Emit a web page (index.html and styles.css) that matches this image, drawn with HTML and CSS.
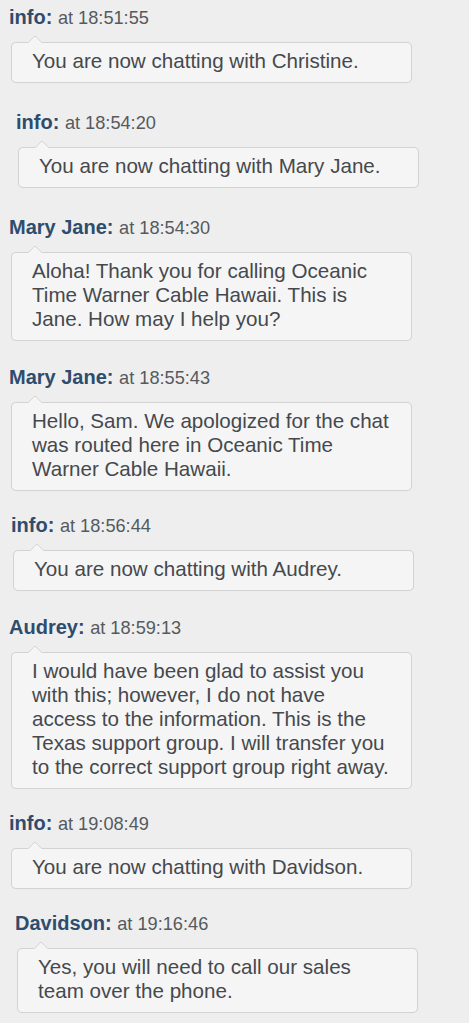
FILE: index.html
```html
<!DOCTYPE html>
<html lang="en">
<head>
<meta charset="utf-8">
<title>Chat transcript</title>
<link rel="stylesheet" href="styles.css">
</head>
<body>
<div class="log">
  <div class="entry gap-lg">
    <div class="meta"><span class="who">info:</span> <span class="when">at 18:51:55</span></div>
    <div class="bubble">You are now chatting with Christine.</div>
  </div>
  <div class="entry gap-lg indent-lg">
    <div class="meta"><span class="who">info:</span> <span class="when">at 18:54:20</span></div>
    <div class="bubble">You are now chatting with Mary Jane.</div>
  </div>
  <div class="entry gap-md">
    <div class="meta"><span class="who">Mary Jane:</span> <span class="when">at 18:54:30</span></div>
    <div class="bubble">Aloha! Thank you for calling Oceanic<br>Time Warner Cable Hawaii. This is<br>Jane. How may I help you?</div>
  </div>
  <div class="entry">
    <div class="meta"><span class="who">Mary Jane:</span> <span class="when">at 18:55:43</span></div>
    <div class="bubble">Hello, Sam. We apologized for the chat<br>was routed here in Oceanic Time<br>Warner Cable Hawaii.</div>
  </div>
  <div class="entry gap-md indent-sm">
    <div class="meta"><span class="who">info:</span> <span class="when">at 18:56:44</span></div>
    <div class="bubble">You are now chatting with Audrey.</div>
  </div>
  <div class="entry">
    <div class="meta"><span class="who">Audrey:</span> <span class="when">at 18:59:13</span></div>
    <div class="bubble">I would have been glad to assist you<br>with this; however, I do not have<br>access to the information. This is the<br>Texas support group. I will transfer you<br>to the correct support group right away.</div>
  </div>
  <div class="entry">
    <div class="meta"><span class="who">info:</span> <span class="when">at 19:08:49</span></div>
    <div class="bubble">You are now chatting with Davidson.</div>
  </div>
  <div class="entry indent-md">
    <div class="meta"><span class="who">Davidson:</span> <span class="when">at 19:16:46</span></div>
    <div class="bubble">Yes, you will need to call our sales<br>team over the phone.</div>
  </div>
</div>
</body>
</html>
```
FILE: styles.css
```css
html, body {
  margin: 0;
  padding: 0;
  background: #eeeeee;
}

body {
  font-family: "Liberation Sans", Arial, Helvetica, sans-serif;
  color: #474c50;
}

.log {
  padding-top: 6px;
  display: flex;
  flex-direction: column;
}

.entry {
  margin: 0 0 23px 9px;
  display: flex;
  flex-direction: column;
  align-items: flex-start;
}

.entry.gap-lg { margin-bottom: 28px; }
.entry.gap-md { margin-bottom: 25px; }
.entry.indent-sm { margin-left: 11px; }
.entry.indent-md { margin-left: 15px; }
.entry.indent-lg { margin-left: 16px; }

.meta {
  font-size: 20px;
  line-height: 22px;
  height: 22px;
  margin-bottom: 14px;
  white-space: nowrap;
}

.who {
  font-weight: bold;
  color: #2f4c6d;
}

.when {
  font-size: 18.2px;
  color: #555a5e;
}

.bubble {
  position: relative;
  box-sizing: border-box;
  width: 401px;
  margin-left: 2px;
  padding: 6px 12px 9px 20px;
  font-size: 20.6px;
  line-height: 24px;
  color: #45494d;
  white-space: nowrap;
  background: #f5f5f5;
  border: 1px solid #d3d3d3;
  border-radius: 5px;
  box-shadow: 0 0 1px rgba(0, 0, 0, 0.06);
}

.bubble::before {
  content: "";
  position: absolute;
  top: -6px;
  left: 18px;
  width: 10px;
  height: 10px;
  box-sizing: border-box;
  background: #f5f5f5;
  border-top: 1px solid #d3d3d3;
  border-left: 1px solid #d3d3d3;
  border-top-left-radius: 2px;
  transform: rotate(45deg);
}
```
